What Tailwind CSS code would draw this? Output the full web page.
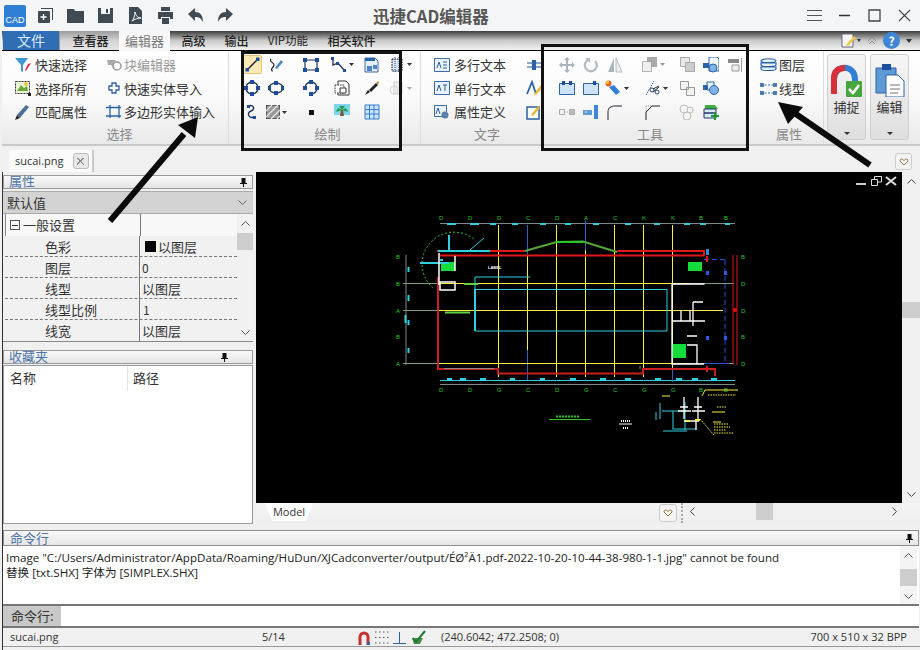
<!DOCTYPE html>
<html lang="zh-CN">
  <head>
    <meta charset="UTF-8" />
    <title>迅捷CAD编辑器</title>
    <script src="https://cdn.jsdelivr.net/npm/@tailwindcss/browser@4"></script>
  </head>
  <body class="bg-[#eef0f2]">
    <div class="relative w-[920px] h-[650px] overflow-hidden flex flex-col font-['Noto_Sans_CJK_SC','Noto_Sans',sans-serif] text-[13px] text-[#333]">
      <!-- title bar -->
      <header class="relative h-[31px] shrink-0 flex items-center bg-[#f4f5f6] pl-[4px]">
        <div class="w-[22px] h-[22px] rounded-[2px] bg-[#2f7fd6] flex items-end justify-center text-white text-[9px] leading-[13px] font-['Liberation_Sans',sans-serif]">CAD</div>
        <div class="flex items-center gap-[13px] ml-[11px] text-[#3f4a52]">
          <svg class="w-[17px] h-[17px]" viewBox="0 0 17 17"><path d="M4 1h12v12h-1V2H4z" fill="#3f4a52"/><rect x="1" y="4" width="12" height="12" rx="1" fill="#3f4a52"/><path d="M6.500 7v6M3.500 10h6" stroke="#fff" stroke-width="1.300"/></svg>
          <svg class="w-[17px] h-[17px]" viewBox="0 0 17 17"><path d="M0 2h7l1 2h9v12H0z" fill="#3f4a52"/></svg>
          <svg class="w-[17px] h-[17px]" viewBox="0 0 17 17"><path d="M1 1h15v15H1z" fill="#3f4a52"/><path d="M4 1h9v6H4z" fill="#f4f5f6"/><path d="M9 2h2v4H9z" fill="#3f4a52"/></svg>
          <svg class="w-[17px] h-[17px]" viewBox="0 0 17 17"><path d="M2 0h9l4 4v13H2z" fill="#3f4a52"/><path d="M5 14c2-2 3-6 3-9 1 4 3 6 6 6-3 0-6 1-9 3z" fill="none" stroke="#fff"/></svg>
          <svg class="w-[17px] h-[17px]" viewBox="0 0 17 17"><path d="M4 0h9v4H4zM1 5h15v7h-3v-2H4v2H1zM5 11h7v6H5z" fill="#3f4a52"/></svg>
          <svg class="w-[17px] h-[17px]" viewBox="0 0 17 17"><path d="M1 7 8 1v4c5 0 8 3 8 10-2-4-4-5-8-5v4z" fill="#3f4a52"/></svg>
          <svg class="w-[17px] h-[17px]" viewBox="0 0 17 17"><path d="M16 7 9 1v4C4 5 1 8 1 15c2-4 4-5 8-5v4z" fill="#3f4a52"/></svg>
        </div>
        <div class="absolute left-[373px] top-[5px] text-[16.500px] leading-[22px] font-bold text-[#555]">迅捷CAD编辑器</div>
        <div class="ml-auto flex items-center gap-[15px] pr-[8px] text-[#444]">
          <svg class="w-[15px] h-[15px]" viewBox="0 0 15 15" fill="none" stroke="#555"><path d="M0 2.500h15M0 7.500h15M0 12.500h15"/></svg>
          <svg class="w-[15px] h-[15px]" viewBox="0 0 15 15" fill="none" stroke="#333" stroke-width="1.500"><path d="M2 7.500h11"/></svg>
          <svg class="w-[15px] h-[15px]" viewBox="0 0 15 15" fill="none" stroke="#444" stroke-width="1.300"><path d="M2 2h11v11H2z"/></svg>
          <svg class="w-[15px] h-[15px]" viewBox="0 0 15 15" fill="none" stroke="#444" stroke-width="1.100"><path d="m2 2 11 11M13 2 2 13"/></svg>
        </div>
      </header>

      <!-- menu tabs -->
      <nav class="relative ml-[2px] h-[20px] shrink-0 flex items-stretch border-b border-black bg-linear-to-b from-[#3d3d3d] via-[#c9c9c9] to-[#f2f2f2] text-[12px] leading-[19px] text-[#222] font-medium whitespace-nowrap">
        <div class="w-[56px] ml-[1px] bg-[#2f6db5] text-[#dbe9fa] text-[14px] font-normal text-center">文件</div>
        <div class="w-[60px] text-center pl-[2px] border-l border-[#999] bg-[#dcdcdc]/60">查看器</div>
        <div class="w-[51px] -mb-px bg-[#f8f8f8] text-center text-[#777] text-[13px] font-normal">编辑器</div>
        <div class="ml-[11px] w-[25px] text-center">高级</div>
        <div class="ml-[18px] w-[25px] text-center">输出</div>
        <div class="ml-[18px] w-[42px] text-center text-[11.500px] font-normal">VIP功能</div>
        <div class="ml-[18px] w-[49px] text-center">相关软件</div>
        <div class="ml-auto pr-[8px] flex items-center gap-[6px]">
          <svg class="w-[20px] h-[16px]" viewBox="0 0 20 16"><path d="M1 1h11v13H1z" fill="#f5f5f5" stroke="#667"/><path d="m5 12 8-9 2 2-8 8z" fill="#e8c840"/><path d="m16 6 4 0-2 3z" fill="#333"/></svg>
          <svg class="w-[10px] h-[10px]" viewBox="0 0 10 10" fill="none" stroke="#888"><path d="m1 5 4-4 4 4M2 8l3-3 3 3"/></svg>
          <div class="w-[17px] h-[17px] rounded-full bg-[#3f86d6] text-white text-[12px] leading-[17px] font-bold text-center">?</div>
          <svg class="w-[6px] h-[4px]" viewBox="0 0 6 4"><path d="M0 0h6L3 4z" fill="#333"/></svg>
        </div>
      </nav>

      <!-- ribbon -->
      <section class="ml-[2px] h-[95px] shrink-0 flex bg-linear-to-b from-white via-[#fafafa] to-[#e9e9e9] border-b-2 border-[#c9c9c9]">
        <!-- 选择 -->
        <div class="w-[227px] shrink-0 flex flex-col border-r border-[#dcdcdc]">
          <div class="mt-[2px] h-[72px] pl-[12px] grid grid-cols-[92px_1fr] grid-rows-3 items-center whitespace-nowrap">
            <div class="flex items-center gap-[3px]"><svg class="w-[18px] h-[18px]" viewBox="0 0 18 18"><path d="M1 2h13L9 9v7l-2-1V9z" fill="#3f97d8"/><path d="m12 15 5-8-3 1-3 6z" fill="#d8303a"/></svg>快速选择</div>
            <div class="flex items-center gap-[2px] text-[#999]"><svg class="w-[16px] h-[16px]" viewBox="0 0 16 16"><path d="M1 3h9l-3 4 2 5-4-4H2z" fill="#aaa"/><circle cx="11" cy="9" r="4" fill="none" stroke="#999" stroke-width="1.500"/></svg>块编辑器</div>
            <div class="flex items-center gap-[3px]"><svg class="w-[18px] h-[18px]" viewBox="0 0 18 18"><path d="M1.500 2.500h14v12h-14z" fill="#e9f3d8" stroke="#333" stroke-dasharray="2 1"/><path d="m3 12 4-6 3 3 3-2 1 5z" fill="#6ca83c"/><circle cx="12" cy="5" r="2" fill="#e8c840"/><path d="M14 14h3v3h-3z" fill="#222"/></svg>选择所有</div>
            <div class="flex items-center gap-[2px]"><svg class="w-[16px] h-[16px]" viewBox="0 0 16 16" fill="none" stroke="#2a62a8" stroke-width="1.300"><path d="M6 3h4v3h3v4h-3v3H6v-3H3V6h3z"/></svg>快速实体导入</div>
            <div class="flex items-center gap-[3px]"><svg class="w-[18px] h-[18px]" viewBox="0 0 18 18"><path d="m3 12 9-10 3 2-9 11z" fill="#4d6f96"/><path d="m1 17 2-5 3 3z" fill="#222"/></svg>匹配属性</div>
            <div class="flex items-center gap-[2px]"><svg class="w-[16px] h-[16px]" viewBox="0 0 16 16" fill="none" stroke="#2a62a8" stroke-width="1.300"><path d="M4 1v13M13 1v13M0 3.500h15M0 12h15"/></svg>多边形实体输入</div>
          </div>
          <div class="mt-auto h-[20px] text-center text-[#888] leading-[20px] pl-[9px]">选择</div>
        </div>
        <!-- 绘制 -->
        <div class="w-[192px] shrink-0 flex flex-col border-r border-[#dcdcdc]">
          <div class="mt-[2px] h-[72px] pl-[11px] grid grid-cols-[24px_24px_46px_16px_44px_12px] grid-rows-3 items-center justify-items-center">
            <div class="w-[19px] h-[19px] bg-[#fde9b8] border border-[#e8c070] rounded-[2px] flex items-center justify-center"><svg class="w-[15px] h-[15px] shrink-0" viewBox="0 0 15 15"><path d="m2 13 11-11" stroke="#1a1a1a" stroke-width="1.300"/><rect x="0.500" y="11" width="3.500" height="3.500" fill="#1d4e9e"/><rect x="11" y="0.500" width="3.500" height="3.500" fill="#1d4e9e"/></svg></div>
            <svg class="w-[16px] h-[16px] shrink-0" viewBox="0 0 16 16"><path d="M3 2c-3 3 6 4 2 8-2 2-2 4 0 4" fill="none" stroke="#223" stroke-width="1.200"/><path d="m7 11 6-8 2 2-6 7z" fill="#4c86c8"/></svg>
            <svg class="w-[16px] h-[16px] shrink-0" viewBox="0 0 16 16"><path d="M2 3h12v10H2z" fill="none" stroke="#1f2f50" stroke-width="1.200"/><path d="M0 1h4v4H0zM12 1h4v4h-4zM0 11h4v4H0zM12 11h4v4h-4z" fill="#1d4e9e"/></svg>
            <div class="flex items-center gap-[2px] shrink-0"><svg class="w-[16px] h-[16px]" viewBox="0 0 16 16"><path d="M2 2v6l5-2 6 7" fill="none" stroke="#1f2f50" stroke-width="1.300"/><path d="M0 0h3v3H0zM5 5h3v3H5zM12 12h3v3h-3z" fill="#1d4e9e"/></svg><svg class="w-[5px] h-[3px]" viewBox="0 0 5 3"><path d="M0 0h5L2.500 3z" fill="#333"/></svg></div>
            <svg class="w-[16px] h-[16px] shrink-0" viewBox="0 0 16 16"><path d="M1 1h10l3 3v11H1z" fill="#e8eef6" stroke="#3a6aa8"/><path d="M1 1h10v3H1z" fill="#2a62a8"/><path d="M3 9h5v5H3zM9 8h4v4H9z" fill="#4c86c8"/></svg>
            <div class="flex items-center gap-[2px] shrink-0"><svg class="w-[16px] h-[16px]" viewBox="0 0 16 16"><path d="M3 2h10v12H3z" fill="#dbe6f3" stroke="#111" stroke-dasharray="1.500 1"/><path d="M6 0v16M10 0v16" stroke="#1d4e9e" stroke-dasharray="1 1"/></svg><svg class="w-[5px] h-[3px]" viewBox="0 0 5 3"><path d="M0 0h5L2.500 3z" fill="#333"/></svg></div>

            <svg class="w-[16px] h-[16px] shrink-0" viewBox="0 0 16 16"><circle cx="8" cy="8" r="6" fill="none" stroke="#1f2f50" stroke-width="1.300"/><path d="M6 0h4v4H6zM6 12h4v4H6zM0 6h4v4H0zM12 6h4v4h-4z" fill="#1d4e9e"/></svg>
            <svg class="w-[16px] h-[16px] shrink-0" viewBox="0 0 16 16"><ellipse cx="8" cy="8" rx="7" ry="5" fill="none" stroke="#1f2f50" stroke-width="1.300"/><path d="M6 1h4v4H6zM6 11h4v4H6zM0 6h3v4H0zM13 6h3v4h-3z" fill="#1d4e9e"/></svg>
            <svg class="w-[16px] h-[16px] shrink-0" viewBox="0 0 16 16"><path d="M2 8a6 6 0 0 1 12 0M14 8a6 6 0 0 1-6 6" fill="none" stroke="#1f2f50" stroke-width="1.300"/><path d="M6 0h4v4H6zM0 6h4v4H0zM12 6h4v4h-4zM6 12h4v4H6z" fill="#1d4e9e"/></svg>
            <svg class="w-[16px] h-[16px] shrink-0" viewBox="0 0 16 16" fill="#fff" stroke="#333"><path d="M4 1h8l3 3v11H4z"/><path d="M1 5h9v8H1z" stroke-dasharray="1.500 1"/><path d="M6 8h6v5H6z"/></svg>
            <svg class="w-[16px] h-[16px] shrink-0" viewBox="0 0 16 16"><path d="m1 15 3-5 2 2z" fill="#111"/><path d="m5 10 7-7 2 2-7 7z" fill="#222"/><path d="m12 3 2-2 1 1-1 3z" fill="#c48a3a"/></svg>
            <div class="flex items-center gap-[2px] shrink-0 opacity-40"><svg class="w-[16px] h-[16px]" viewBox="0 0 16 16"><path d="M5 2h8v12H5z" fill="#ddd" stroke="#888"/><circle cx="5" cy="10" r="4" fill="none" stroke="#999"/></svg><svg class="w-[5px] h-[3px]" viewBox="0 0 5 3"><path d="M0 0h5L2.500 3z" fill="#333"/></svg></div>

            <svg class="w-[16px] h-[16px] shrink-0" viewBox="0 0 16 16"><path d="M5 2c4-2 7 3 2 5s-2 8 3 6" fill="none" stroke="#1f2f50" stroke-width="1.400"/><path d="M3 1h3v3H3zM9 12h3v3H9z" fill="#1d4e9e"/></svg>
            <div class="flex items-center gap-[2px] shrink-0"><svg class="w-[14px] h-[14px]" viewBox="0 0 14 14"><path d="M0 0h14v14H0z" fill="#999" stroke="#222"/><path d="m0 6 6-6M0 12 12 0M5 14l9-9M11 14l3-3" stroke="#eee" stroke-width="1.200"/></svg><svg class="w-[5px] h-[3px]" viewBox="0 0 5 3"><path d="M0 0h5L2.500 3z" fill="#333"/></svg></div>
            <div class="w-[5px] h-[5px] bg-[#111]"></div>
            <svg class="w-[16px] h-[16px] shrink-0" viewBox="0 0 16 16"><path d="M0 0h16v16H0z" fill="#7ed4ea"/><path d="M0 11h16v5H0z" fill="#eaf6fb"/><path d="M7 6h2l1 6H6z" fill="#7a5a30"/><path d="M8 6 2 8l2-4zM8 6l6 2-2-4zM8 6 5 2h6z" fill="#1f9a4a"/></svg>
            <svg class="w-[16px] h-[16px] shrink-0" viewBox="0 0 16 16"><path d="M1 1h14v14H1z" fill="#cfe3f8" stroke="#2f7ed8"/><path d="M1 5.500h14M1 10h14M5.500 1v14M10 1v14" stroke="#2f7ed8"/></svg>
            <div></div>
          </div>
          <div class="mt-auto h-[20px] text-center text-[#888] leading-[20px] pl-[6px]">绘制</div>
        </div>
        <!-- 文字 -->
        <div class="w-[120px] shrink-0 flex flex-col">
          <div class="mt-[2px] h-[72px] pl-[13px] grid grid-cols-[92px_1fr] grid-rows-3 items-center whitespace-nowrap">
            <div class="flex items-center gap-[4px]"><svg class="w-[16px] h-[16px]" viewBox="0 0 16 16"><path d="M.5 1.500h15v13H.5z" fill="#eaf2fb" stroke="#3a6aa8"/><path d="m3 11 2-6 2 6M9 5h4M9 8h4M9 11h4" stroke="#2a62a8" fill="none"/></svg>多行文本</div>
            <svg class="w-[16px] h-[16px]" viewBox="0 0 16 16"><path d="M1 6h14M1 10h14" stroke="#1d4e9e"/><path d="M6 3h4v10H6z" fill="#2a62a8"/></svg>
            <div class="flex items-center gap-[4px]"><svg class="w-[16px] h-[16px]" viewBox="0 0 16 16"><path d="M.5 1.500h15v13H.5z" fill="#eaf2fb" stroke="#3a6aa8"/><path d="m3 11 2-6 2 6M9 5h4M11 5v6" stroke="#2a62a8" fill="none"/></svg>单行文本</div>
            <svg class="w-[17px] h-[17px]" viewBox="0 0 17 17"><path d="m1 14 5-12 4 12" fill="none" stroke="#2a62a8" stroke-width="1.800"/><path d="m8 14 7-9 2 2-7 8z" fill="#e8b830"/></svg>
            <div class="flex items-center gap-[4px]"><svg class="w-[16px] h-[16px]" viewBox="0 0 16 16"><path d="M.5 1.500h12v11H.5z" fill="#eaf2fb" stroke="#3a6aa8"/><path d="m2 10 2-6 2 6" stroke="#2a62a8" fill="none"/><circle cx="11" cy="11" r="3.500" fill="#5c7fa8"/></svg>属性定义</div>
            <svg class="w-[16px] h-[16px]" viewBox="0 0 16 16"><path d="M1 3h12v12H1z" fill="#fff" stroke="#2a62a8" stroke-width="1.500"/><path d="m5 11 7-9 2 2-7 8z" fill="#e8b830"/></svg>
          </div>
          <div class="mt-auto h-[20px] leading-[20px] text-[#888] pl-[53px]">文字</div>
        </div>
        <!-- 工具 -->
        <div class="w-[208px] shrink-0 flex flex-col">
          <div class="mt-[2px] h-[72px] pl-[14px] grid grid-cols-[24px_24px_24px_52px_16px_32px_16px] grid-rows-3 items-center justify-items-center">
            <svg class="w-[16px] h-[16px] shrink-0" viewBox="0 0 16 16" fill="#a9b4bc"><path d="M8 0l3 3H9v4h4V5l3 3-3 3V9H9v4h2l-3 3-3-3h2V9H3v2L0 8l3-3v2h4V3H5z"/></svg>
            <svg class="w-[16px] h-[16px] shrink-0" viewBox="0 0 16 16"><path d="M12 4a6 6 0 1 1-7-1" fill="none" stroke="#b4bcc2" stroke-width="2.400"/><path d="M2 1h5v5z" fill="#b4bcc2"/></svg>
            <svg class="w-[16px] h-[16px] shrink-0" viewBox="0 0 16 16"><path d="M7 1v14H1z" fill="#a9b4bc"/><path d="M9 1v14h6z" fill="#eee" stroke="#b4bcc2"/></svg>
            <div class="flex items-center gap-[3px] shrink-0"><svg class="w-[15px] h-[15px]" viewBox="0 0 15 15"><path d="M5 0h10v10H5z" fill="#aaa"/><path d="M.5 4.500h9v10h-9z" fill="#eee" stroke="#777" stroke-dasharray="1 1"/></svg><svg class="w-[5px] h-[3px]" viewBox="0 0 5 3"><path d="M0 0h5L2.500 3z" fill="#999"/></svg></div>
            <svg class="w-[15px] h-[15px] shrink-0" viewBox="0 0 15 15" fill="#e9e9e9" stroke="#aaa"><path d="M.5.500h9v9h-9z"/><path d="M5.500 5.500h9v9h-9z" fill="#ccc"/></svg>
            <svg class="w-[16px] h-[16px] shrink-0" viewBox="0 0 16 16"><path d="M6 0h8l2 2v12H6z" fill="#f4f7fb" stroke="#2a62a8"/><path d="M0 6h6v5H0z" fill="#2a62a8"/><circle cx="10" cy="11" r="4" fill="#7fb2e6" stroke="#2a62a8"/></svg>
            <svg class="w-[14px] h-[14px] shrink-0" viewBox="0 0 14 14"><path d="M0 1h11v4H0z" fill="#888"/><path d="M4 7h7v6H4z" fill="#eee" stroke="#999"/><path d="M13.500 0v14" stroke="#999"/></svg>

            <svg class="w-[16px] h-[14px] shrink-0" viewBox="0 0 16 14"><path d="M.5 2.500h15v11H.5z" fill="#cfe3f8" stroke="#2a62a8"/><path d="M3 0h3v4H3zM10 0h3v4h-3z" fill="#1d4e9e"/></svg>
            <svg class="w-[16px] h-[14px] shrink-0" viewBox="0 0 16 14"><path d="M.5 2.500h15v11H.5z" fill="#cfe3f8" stroke="#2a62a8"/><path d="M10 0h3v4h-3z" fill="#1d4e9e"/></svg>
            <div class="flex items-center gap-[3px] shrink-0 ml-[4px]"><svg class="w-[16px] h-[16px]" viewBox="0 0 16 16"><path d="M4 7l5-2 6 7-4 3z" fill="#2f7ed8"/><circle cx="3.500" cy="3.500" r="3" fill="#e8602a"/><path d="M1 1h3v3H1z" fill="#f4c030"/></svg><svg class="w-[5px] h-[3px]" viewBox="0 0 5 3"><path d="M0 0h5L2.500 3z" fill="#333"/></svg></div>
            <div class="flex items-center gap-[2px] shrink-0 ml-[6px]"><svg class="w-[16px] h-[16px]" viewBox="0 0 16 16" fill="none" stroke="#2a4a80"><path d="M1 15 9 1" stroke-dasharray="1.500 1"/><circle cx="7" cy="10" r="2"/><circle cx="12" cy="12" r="2"/><path d="m8 9 6-3M8 12l6-5" stroke="#222"/></svg><svg class="w-[5px] h-[3px]" viewBox="0 0 5 3"><path d="M0 0h5L2.500 3z" fill="#333"/></svg></div>
            <svg class="w-[15px] h-[15px] shrink-0" viewBox="0 0 15 15" fill="#f2f2f2" stroke="#999"><path d="M.5.500h8v8h-8zM6.500 6.500h8v8h-8z"/></svg>
            <svg class="w-[16px] h-[14px] shrink-0" viewBox="0 0 16 14"><path d="M4 1h7v8H4z" fill="#eaf2fb" stroke="#2a62a8"/><path d="M0 4h5v5H0z" fill="#2a62a8"/><circle cx="11" cy="9" r="4.500" fill="#7fb2e6" stroke="#2a62a8"/></svg>
            <div></div>

            <svg class="w-[16px] h-[8px] shrink-0" viewBox="0 0 16 8" fill="none" stroke="#aaa"><path d="M.5 1.500h5v5h-5z"/><path d="M10.500 1.500h5v5h-5z" fill="#bbb"/><path d="M6 4h4" stroke-dasharray="1 1"/></svg>
            <svg class="w-[16px] h-[16px] shrink-0" viewBox="0 0 16 16"><path d="M0 6h9v5H0z" fill="#5f9ad6"/><path d="M2 8h2" stroke="#fff"/><path d="M11 1h4v14h-4z" fill="#3f86d6"/></svg>
            <svg class="w-[16px] h-[16px] shrink-0" viewBox="0 0 16 16" fill="none"><path d="M1 16V8c0-4 3-6 7-6h7" stroke="#223"/><path d="M3 3 1 5" stroke="#2a62a8" stroke-dasharray="1 1"/></svg>
            <svg class="w-[16px] h-[16px] shrink-0" viewBox="0 0 16 16" fill="none"><path d="M1 16V8l6-6h8" stroke="#223"/><path d="M1 2h6M1 2v6" stroke="#999" stroke-dasharray="1 1"/></svg>
            <svg class="w-[16px] h-[16px] shrink-0" viewBox="0 0 16 16" fill="#f4f4f4" stroke="#bbb"><circle cx="5" cy="5" r="4"/><circle cx="11" cy="6" r="3"/><circle cx="8" cy="12" r="4"/></svg>
            <svg class="w-[16px] h-[16px] shrink-0" viewBox="0 0 16 16"><path d="M2 1h10l3 4H2z" fill="#3fae3f"/><path d="M1 5h12v4H1zM1 9h12v5H1z" fill="#dbe9f8" stroke="#1f3a66"/><path d="M11 8h2v3h3v2h-3v3h-2v-3H8v-2h3z" fill="#1e9a3c"/></svg>
            <div></div>
          </div>
          <div class="mt-auto h-[20px] leading-[20px] text-[#888] pl-[96px]">工具</div>
        </div>
        <!-- 属性 -->
        <div class="w-[75px] shrink-0 flex flex-col border-r border-[#dcdcdc]">
          <div class="mt-[2px] pl-[11px] h-[48px] flex flex-col whitespace-nowrap">
            <div class="h-[24px] flex items-center gap-[2px]"><svg class="w-[17px] h-[16px]" viewBox="0 0 17 16" fill="#eaf2fb" stroke="#2a62a8" stroke-width="1.200"><path d="M1 12c0 2 15 2 15 0v-2H1zM1 8c0 2 15 2 15 0V6H1zM1 4c0 2 15 2 15 0c0-3-15-3-15 0z"/></svg>图层</div>
            <div class="h-[24px] flex items-center gap-[2px]"><svg class="w-[17px] h-[14px]" viewBox="0 0 17 14"><path d="M1 3h15M1 11h15" stroke="#2a62a8" stroke-dasharray="2 1.500"/><path d="M0 1h4v4H0zM13 1h4v4h-4zM0 9h4v4H0zM13 9h4v4h-4z" fill="#2a62a8" opacity=".8"/></svg>线型</div>
          </div>
          <div class="mt-auto h-[20px] leading-[20px] text-[#888] pl-[27px]">属性</div>
        </div>
        <!-- 捕捉 / 编辑 -->
        <div class="flex gap-[4px] pl-[3px] py-[3px] h-[92px]">
          <div class="w-[39px] rounded-[3px] border border-[#cfcfcf] bg-linear-to-b from-[#f6f6f6] to-[#dedede] flex flex-col items-center">
            <svg class="w-[32px] h-[33px] mt-[9px] shrink-0" viewBox="0 0 32 33"><path d="M3 30V15C3 0 24 0 24 15v4" fill="none" stroke="#2f7ed8" stroke-width="6"/><path d="M3 30V15C3 5 10 4 14 4" fill="none" stroke="#d8303a" stroke-width="6"/><rect x="15" y="17" width="16" height="16" fill="#47a53e" rx="1"/><path d="m18 25 4 4 6-8" stroke="#fff" stroke-width="2.500" fill="none"/></svg>
            <div class="mt-[1px] leading-[18px]">捕捉</div>
            <svg class="mt-auto mb-[4px] w-[6px] h-[3px]" viewBox="0 0 6 3"><path d="M0 0h6L3 3z" fill="#333"/></svg>
          </div>
          <div class="w-[39px] rounded-[3px] border border-[#cfcfcf] bg-linear-to-b from-[#f6f6f6] to-[#dedede] flex flex-col items-center">
            <svg class="w-[30px] h-[33px] mt-[9px] shrink-0" viewBox="0 0 30 33"><path d="M1 4h20v25H1z" fill="#5f9ad6" stroke="#2a62a8"/><path d="M7 0h9v6H7z" fill="#1d4e9e"/><path d="M11 11h12l6 6v16H11z" fill="#fff" stroke="#2a62a8"/><path d="M15 21h10M15 25h10M15 29h8" stroke="#777"/></svg>
            <div class="mt-[1px] leading-[18px]">编辑</div>
            <svg class="mt-auto mb-[4px] w-[6px] h-[3px]" viewBox="0 0 6 3"><path d="M0 0h6L3 3z" fill="#333"/></svg>
          </div>
        </div>
      </section>

      <!-- document tab strip -->
      <div class="ml-[2px] h-[26px] shrink-0 flex items-end bg-[#f0f0f0] relative">
        <div class="ml-[7px] w-[85px] h-[22px] bg-[#fafafa] border-r-2 border-[#c9c9c9] flex items-center pl-[6px] text-[11px] font-['Open_Sans',sans-serif]">
          sucai.png
          <div class="ml-[9px] w-[16px] h-[16px] border border-[#bbb] rounded-[3px] bg-[#e8e8e8] flex items-center justify-center text-[#999]">
            <svg class="w-[9px] h-[9px]" viewBox="0 0 9 9" fill="none" stroke="#888"><path d="m1 1 7 7M8 1 1 8m1-7 6 7M7 1 1 7"/></svg>
          </div>
        </div>
        <div class="absolute right-[8px] top-[7px] w-[17px] h-[17px] border border-[#ccc] rounded-[3px] bg-[#f4f4f4] flex items-center justify-center">
          <svg class="w-[10px] h-[8px]" viewBox="0 0 10 8" fill="none" stroke="#8a7a3a"><path d="M5 7 1 3c0-3 3-2 4-.5C6 1 9 0 9 3z"/></svg>
        </div>
      </div>

      <!-- workspace -->
      <div class="ml-[2px] flex-1 min-h-0 flex flex-col border-l border-[#333] bg-[#f0f0f0]">
        <div class="h-[355px] shrink-0 flex">
          <!-- left panels -->
          <aside class="w-[250px] shrink-0 flex flex-col pt-[3px] pb-[3px]">
            <div class="h-[14px] border border-[#9a9a9a] bg-linear-to-b from-[#fafafa] to-[#e4e4e4] flex items-center justify-between pl-[5px] pr-[5px] pb-[3px] text-[#4d74a8] leading-[12px]">属性<svg class="w-[7px] h-[9px] mt-[3px]" viewBox="0 0 7 9"><path d="M1.500 0h4v5h1.500v1H4v3H3V6H0V5h1.500z" fill="#111"/></svg></div>
            <div class="mt-[2px] h-[23px] bg-[#d3d3d3] border-y border-[#aaa] flex items-center justify-between px-[4px]">默认值<svg class="w-[9px] h-[5px] mr-[2px]" viewBox="0 0 9 5" fill="none" stroke="#666"><path d="m.5.500 4 4 4-4"/></svg></div>
            <div class="h-[128px] flex bg-[#f1f1f1] border-b border-[#888]">
              <div class="flex-1 pl-[2px]">
                <div class="h-[22px] grid grid-cols-[135px_1fr] border-l border-[#888]">
                  <div class="flex items-center gap-[3px] pl-[4px] border-r border-[#777] bg-[#f8f8f8]"><div class="w-[10px] h-[10px] border border-[#555] relative flex items-center justify-center"><div class="w-[6px] h-px bg-[#333]"></div></div>一般设置</div>
                  <div class="bg-[#f8f8f8]"></div>
                </div>
                <div class="h-[21px] grid grid-cols-[135px_1fr] border-b border-dashed border-[#777]"><div class="pl-[40px] border-r border-[#777] leading-[21px]">色彩</div><div class="pl-[5px] flex items-center gap-[2px]"><div class="w-[11px] h-[11px] bg-black"></div>以图层</div></div>
                <div class="h-[21px] grid grid-cols-[135px_1fr] border-b border-dashed border-[#777]"><div class="pl-[40px] border-r border-[#777] leading-[21px]">图层</div><div class="pl-[2px] leading-[21px] text-[12px]">0</div></div>
                <div class="h-[21px] grid grid-cols-[135px_1fr] border-b border-dashed border-[#777]"><div class="pl-[40px] border-r border-[#777] leading-[21px]">线型</div><div class="pl-[2px] leading-[21px]">以图层</div></div>
                <div class="h-[21px] grid grid-cols-[135px_1fr] border-b border-dashed border-[#777]"><div class="pl-[40px] border-r border-[#777] leading-[21px]">线型比例</div><div class="pl-[3px] leading-[21px] text-[12px]">1</div></div>
                <div class="h-[21px] grid grid-cols-[135px_1fr]"><div class="pl-[40px] border-r border-[#777] leading-[21px]">线宽</div><div class="pl-[2px] leading-[21px]">以图层</div></div>
              </div>
              <div class="w-[16px] flex flex-col items-center">
                <svg class="w-[9px] h-[5px] mt-[7px]" viewBox="0 0 9 5" fill="none" stroke="#555"><path d="m.5 4.500 4-4 4 4"/></svg>
                <div class="w-full h-[17px] mt-[7px] bg-[#cdcdcd]"></div>
                <svg class="w-[9px] h-[5px] mt-auto mb-[6px]" viewBox="0 0 9 5" fill="none" stroke="#555"><path d="m.5.500 4 4 4-4"/></svg>
              </div>
            </div>
            <div class="mt-[8px] h-[14px] border border-[#9a9a9a] bg-linear-to-b from-[#fafafa] to-[#e4e4e4] flex items-center justify-between pl-[5px] pr-[24px] pb-[3px] text-[#4d74a8] leading-[12px]">收藏夹<svg class="w-[7px] h-[9px] mt-[3px]" viewBox="0 0 7 9"><path d="M1.500 0h4v5h1.500v1H4v3H3V6H0V5h1.500z" fill="#111"/></svg></div>
            <div class="mt-[1px] flex-1 bg-white border border-[#999]">
              <div class="h-[25px] grid grid-cols-[124px_1fr] leading-[23px]"><div class="pl-[6px] border-r border-[#e4e4e4]">名称</div><div class="pl-[5px]">路径</div></div>
            </div>
          </aside>

          <!-- drawing area -->
          <div class="ml-[3px] flex-1 flex flex-col min-w-0">
            <div class="h-[331px] shrink-0 flex">
              <div class="relative flex-1 bg-black">
                <svg class="w-[644px] h-[331px] block" viewBox="256 172 644 331" fill="none" stroke-width="1">
                  <!-- dimension lines top and bottom -->
                  <path d="M440 223.500h295M440 384.500h295" stroke="#7c8a8a"/>
                  <path d="M440 380.500h295" stroke="#2fd0e0"/>
                  <path d="M447 224h9M470 224h9M490 224h6M512 224h6M540 224h6M565 224h6M593 224h6M625 224h6M654 224h6M684 224h6M700 224h6M725 224h5" stroke="#2fd0e0" stroke-width="2"/>
                  <path d="M447 379h5M460 379h6M480 379h6M510 379h5M540 379h5M570 379h6M600 379h6M625 379h6M655 379h6M676 379h6M692 379h6M711 379h6" stroke="#2fd0e0" stroke-width="2"/>
                  <!-- grid -->
                  <path d="M498.500 225v152M527.500 225v152M556.500 225v152M585.500 225v152M614.500 225v152M643.500 225v152M672.500 225v152" stroke="#f8f03c"/>
                  <path d="M527.500 225v30M527.500 350v30M585.500 220v30M672.500 370v12" stroke="#2a62c8"/>
                  <path d="M403 283.500h320M403 310.500h320M403 363.500h320" stroke="#f8f03c"/>
                  <path d="M403 283.500h36M403 310.500h36M403 363.500h36M690 283.500h44M690 363.500h44" stroke="#7f9f7f"/>
                  <!-- column and row bubbles -->
                  <g fill="#28c828" font-size="6" font-family="Liberation Sans" stroke="none">
                    <text x="439" y="220">D</text><text x="468" y="220">D</text><text x="497" y="220">D</text><text x="526" y="220">C</text><text x="555" y="220">D</text><text x="584" y="220">A</text><text x="613" y="220">C</text><text x="642" y="220">K</text><text x="671" y="220">K</text><text x="699" y="220">B</text><text x="724" y="220">B</text>
                    <text x="439" y="392">D</text><text x="468" y="392">D</text><text x="497" y="392">G</text><text x="526" y="392">C</text><text x="555" y="392">D</text><text x="584" y="392">G</text><text x="613" y="392">C</text><text x="642" y="392">G</text><text x="671" y="392">G</text><text x="699" y="392">B</text><text x="724" y="392">B</text>
                    <text x="396" y="259">B</text><text x="396" y="286">B</text><text x="396" y="313">A</text><text x="396" y="339">B</text><text x="396" y="366">A</text>
                    <text x="741" y="259">B</text><text x="741" y="286">D</text><text x="741" y="313">D</text><text x="741" y="339">B</text><text x="741" y="366">D</text>
                  </g>
                  <!-- left dims -->
                  <path d="M406 255v110" stroke="#7c8a8a"/><path d="M408.500 267v5M408.500 295v6M405.500 315v8M408.500 320v5M408.500 348v5" stroke="#2fd0e0" stroke-width="2"/>
                  <!-- roof and walls -->
                  <path d="M437 251h88M617 251h87v5" stroke="#e01818" stroke-width="2"/>
                  <path d="M525 251 556.500 242 583 241.500 617 252" stroke="#55a838" stroke-width="2"/>
                  <path d="M556 242h27" stroke="#28c828" stroke-width="2"/>
                  <path d="M440 255.500h264" stroke="#e01818" stroke-width="2"/>
                  <path d="M438 285v84h60v4.500h145V369h72v7M438 285v-8" stroke="#c82020" stroke-width="2"/>
                  <path d="M444 368.500h50M640 366v3" stroke="#8a8a8a"/>
                  <!-- cyan slab -->
                  <path d="M475.500 289.500h191.500v41.500h-191.500zM475 289v-12h55" stroke="#2fd0e0"/>
                  <path d="M475 289v42" stroke="#2fd0e0" stroke-width="2"/>
                  <path d="M438 251h52M440 260h3" stroke="#2fd0e0" stroke-width="2"/>
                  <!-- green fills -->
                  <rect x="441" y="262" width="14" height="9" fill="#14dc3a"/>
                  <rect x="688" y="262" width="14" height="9" fill="#14dc3a"/>
                  <rect x="672" y="344" width="14" height="14" fill="#14dc3a"/>
                  <path d="M445 312.500h25M464 284h14" stroke="#62d048" stroke-width="2"/>
                  <!-- swing door arc -->
                  <path d="M433 288A31 31 0 0 1 475 240" stroke="#28c828" stroke-dasharray="2 2"/>
                  <path d="M420 263h29M449 235v17" stroke="#2fd0e0" stroke-width="2"/><path d="m470 250 14-12" stroke="#2fd0e0"/>
                  <!-- white details -->
                  <path d="M439 253v32M440 282h15v8h-15zM455 256v15" stroke="#fff" stroke-width="1.500"/>
                  <path d="M672.500 284h32M672 284v80h32M693 302h10M693 302v24M672 321h33M681 310v11M690 310v11M687 336h10M687 345h10v19" stroke="#fff" stroke-width="1.300"/>
                  <text x="488" y="269" fill="#fff" stroke="none" font-size="4" font-family="Liberation Sans" font-weight="bold">LABEL</text>
                  <!-- blue and red right side -->
                  <path d="M704 259.500h24M725 260v103" stroke="#1f52e0" stroke-dasharray="5 3"/>
                  <path d="M705 363.500h24" stroke="#1f52e0"/>
                  <path d="M733 255v110M737 255v110M733 310h4" stroke="#d81818"/>
                  <circle cx="735" cy="310" r="2" fill="#e01010"/>
                  <path d="M706 249h3v6h-3z" fill="#2f8ae0"/><path d="M706 271h3v4h-3zM706 336h3v4h-3zM724 271h3v4h-3zM724 336h3v4h-3z" fill="#2a5ae0"/>
                  <path d="M707 256v6M707 366v6" stroke="#d81818" stroke-width="2"/>
                  <!-- notes under the plan -->
                  <path d="M549 419.500h41" stroke="#28c828"/><path d="M556 416.500h24" stroke="#28c828" stroke-dasharray="2 1" stroke-width="2"/>
                  <path d="M619 424h13" stroke="#fff"/><path d="M621 421h9M623 428h5" stroke="#fff" stroke-dasharray="1 1" stroke-width="2"/>
                  <!-- detail at bottom right -->
                  <path d="M656 412v8M660 403v16M662 411h22M673 411v18M685 430v-28M672.500 429h24M663 431h24" stroke="#2fd0e0"/>
                  <path d="M684 397v22M698 397v22M678 411h13M692 411h13M680 407h8M694 407h8M684 421h12v9M696 421h3" stroke="#fff" stroke-width="1.300"/>
                  <path d="M702 396l3-6h33M712 412h13M662 396h8M713 422h8" stroke="#f8f03c"/>
                  <path d="M708 395h28M717 407h10M714 424h14M714 427h16M714 430h12M714 433h20M700 419l14 16" stroke="#f8f03c" stroke-dasharray="1.500 1"/>
                  <path d="M695 419h5v2h-5zM685 420h5v2h-5z" fill="#f8f03c"/>
                </svg>
                <!-- inner window controls -->
                <div class="absolute right-[5px] top-[4px] flex items-center gap-[3px] text-white">
                  <svg class="w-[12px] h-[10px]" viewBox="0 0 12 10"><path d="M1 7h10v2H1z" fill="#ccc"/></svg>
                  <svg class="w-[12px] h-[10px]" viewBox="0 0 12 10" fill="none" stroke="#ddd"><path d="M1.500 3.500h6v6h-6zM4.500 3V.5h7V6H8"/></svg>
                  <svg class="w-[12px] h-[10px]" viewBox="0 0 12 10" fill="none" stroke="#ddd" stroke-width="2"><path d="m1 1 10 8M11 1 1 9"/></svg>
                </div>
              </div>
              <div class="w-[18px] shrink-0 bg-[#f0f0f0] flex flex-col items-center">
                <svg class="w-[9px] h-[5px] mt-[7px]" viewBox="0 0 9 5" fill="none" stroke="#444"><path d="m.5 4.500 4-4 4 4"/></svg>
                <div class="w-full h-[16px] mt-[118px] bg-[#cdcdcd]"></div>
                <svg class="w-[9px] h-[5px] mt-auto mb-[6px]" viewBox="0 0 9 5" fill="none" stroke="#444"><path d="m.5.500 4 4 4-4"/></svg>
              </div>
            </div>
            <div class="h-[20px] shrink-0 flex items-start bg-linear-to-b from-[#f6f6f6] to-[#ededed] text-[11px] font-['Open_Sans',sans-serif]">
              <div class="ml-[9px] w-[48px] h-[18px] flex items-center justify-center bg-white [clip-path:polygon(0_0,100%_0,85%_100%,15%_100%)]">Model</div>
              <div class="ml-[346px] mt-[1px] w-[18px] h-[18px] border border-[#ccc] rounded-[3px] bg-[#f4f4f4] flex items-center justify-center">
                <svg class="w-[10px] h-[8px]" viewBox="0 0 10 8" fill="none" stroke="#8a7a3a"><path d="M5 7 1 3c0-3 3-2 4-.5C6 1 9 0 9 3z"/></svg>
              </div>
              <div class="ml-[4px] h-full border-l-2 border-dotted border-[#aaa]"></div>
              <div class="ml-[2px] flex-1 h-[17px] bg-[#f0f0f0] flex items-center justify-between px-[5px] relative mr-[18px]">
                <svg class="w-[5px] h-[9px]" viewBox="0 0 5 9" fill="none" stroke="#444"><path d="M4.500.5l-4 4 4 4"/></svg>
                <div class="absolute left-[71px] top-0 w-[17px] h-[17px] bg-[#cdcdcd]"></div>
                <svg class="w-[5px] h-[9px]" viewBox="0 0 5 9" fill="none" stroke="#444"><path d="m.5.500 4 4-4 4"/></svg>
              </div>
            </div>
          </div>
        </div>

        <!-- command panel -->
        <div class="mt-[3px] h-[16px] shrink-0 border border-[#8d8d8d] bg-linear-to-b from-[#f8f8f8] to-[#e6e6e6] flex items-center justify-between pl-[6px] pr-[5px] text-[#4d74a8] leading-[14px] mr-[1px]">命令行<svg class="w-[7px] h-[9px]" viewBox="0 0 7 9"><path d="M1.500 0h4v5h1.500v1H4v3H3V6H0V5h1.500z" fill="#111"/></svg></div>
        <div class="h-[60px] shrink-0 flex bg-white border-b-2 border-[#777] mr-[1px]">
          <div class="flex-1 pl-[3px] pt-[4px] text-[11.600px] leading-[15px] font-['Open_Sans','Noto_Sans_CJK_SC',sans-serif] text-[#222] whitespace-nowrap overflow-hidden">
            <div class="h-[15px]">Image "C:/Users/Administrator/AppData/Roaming/HuDun/XJCadconverter/output/ÉØ²Ä1.pdf-2022-10-20-10-44-38-980-1-1.jpg" cannot be found</div>
            <div class="h-[15px]">替换 [txt.SHX] 字体为 [SIMPLEX.SHX]</div>
          </div>
          <div class="w-[17px] shrink-0 mr-[2px] bg-[#f4f4f4] flex flex-col items-center">
            <svg class="w-[9px] h-[5px] mt-[7px]" viewBox="0 0 9 5" fill="none" stroke="#555"><path d="m.5 4.500 4-4 4 4"/></svg>
            <div class="w-full h-[17px] mt-[11px] bg-[#cdcdcd]"></div>
            <svg class="w-[9px] h-[5px] mt-auto mb-[5px]" viewBox="0 0 9 5" fill="none" stroke="#555"><path d="m.5.500 4 4 4-4"/></svg>
          </div>
        </div>
        <div class="h-[22px] shrink-0 flex border-b-2 border-[#777] mr-[1px]">
          <div class="w-[58px] bg-[#c8c8c8] pl-[8px] leading-[20px]">命令行:</div>
          <div class="flex-1 bg-white"></div>
        </div>
        <footer class="h-[19px] shrink-0 flex items-center bg-[#f0f0f0] border-b border-[#999] text-[11px] font-['Open_Sans',sans-serif] text-[#333] relative whitespace-nowrap">
          <span class="ml-[7px] w-[252px]">sucai.png</span>
          <span class="w-[95px]">5/14</span>
          <span class="flex items-center gap-[3px] w-[84px]">
            <svg class="w-[14px] h-[15px]" viewBox="0 0 14 15"><path d="M3 15V7a4 4 0 0 1 8 0v8" fill="none" stroke="#c83030" stroke-width="3"/><path d="M10 12h3v3h-3z" fill="#2a62a8"/></svg>
            <svg class="w-[15px] h-[15px]" viewBox="0 0 15 15" fill="none" stroke="#555" stroke-dasharray="1.500 2.500"><path d="M1 2h14M1 7.500h14M1 13h14"/></svg>
            <svg class="w-[15px] h-[15px]" viewBox="0 0 15 15" fill="none" stroke="#2a62a8"><path d="M7.500 2v11M1 13.500h13"/></svg>
            <svg class="w-[17px] h-[15px]" viewBox="0 0 17 15"><path d="M2 8h11l-3 6H4z" fill="#4a8a4a"/><path d="m3 8 3 4 9-11" fill="none" stroke="#1e7a2e" stroke-width="2"/></svg>
          </span>
          <span>(240.6042; 472.2508; 0)</span>
          <span class="ml-auto pr-[13px]">700 x 510 x 32 BPP</span>
        </footer>
      </div>

      <!-- marks drawn on top of the screenshot -->
      <svg class="absolute inset-0 w-[920px] h-[650px] pointer-events-none" viewBox="0 0 920 650" fill="none">
        <path d="M242.500 52.500h158v97h-158zM542.500 45.500h205v104h-205z" stroke="#111" stroke-width="3"/>
        <path d="M110 221 184 134" stroke="#0b0b0b" stroke-width="6"/>
        <path d="M198 117 178 125 195 138z" fill="#0b0b0b"/>
        <path d="M870 165 793 112" stroke="#0b0b0b" stroke-width="6"/>
        <path d="M778 102 803 107 788 124z" fill="#0b0b0b"/>
      </svg>
    </div>
  </body>
</html>
